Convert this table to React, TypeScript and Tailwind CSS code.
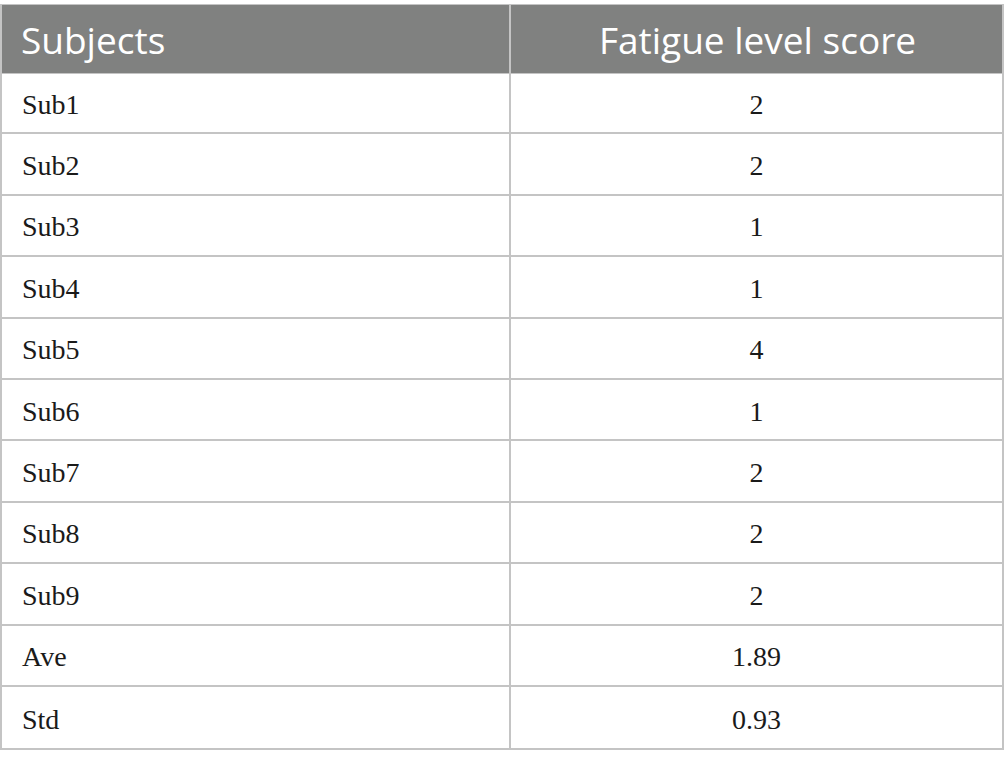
import React from "react";

const rows: [string, string][] = [
  ["Sub1", "2"],
  ["Sub2", "2"],
  ["Sub3", "1"],
  ["Sub4", "1"],
  ["Sub5", "4"],
  ["Sub6", "1"],
  ["Sub7", "2"],
  ["Sub8", "2"],
  ["Sub9", "2"],
  ["Ave", "1.89"],
  ["Std", "0.93"],
];

export default function App() {
  return (
    <div className="w-[1005px] h-[765px] bg-white pt-[4px]">
      <div className="w-[1004px] border-2 border-[#c4c4c4] border-t-[1.5px] border-b-[2px]">
        <div className="flex h-[68px] bg-[#808180] text-white font-['Open_Sans',sans-serif] text-[37px] leading-none">
          <div className="w-[509px] border-r-2 border-[#c4c4c4] flex items-center pl-[19px] pt-[1px]">
            Subjects
          </div>
          <div className="flex-1 flex items-center justify-center pt-[1px] pl-[2px]">
            Fatigue level score
          </div>
        </div>
        {rows.map(([a, b], i) => (
          <div
            key={a}
            className={`flex h-[61.4px] font-['Liberation_Serif',serif] text-[28px] leading-none text-[#1a1a1a] ${
              i < rows.length - 1 ? "border-b-2 border-[#c4c4c4]" : ""
            } ${i === 0 ? "border-t-[1px] border-t-[#c4c4c4]" : ""}`}
          >
            <div className="w-[509px] border-r-2 border-[#c4c4c4] flex items-center pl-[20px] pt-[4px]">
              {a}
            </div>
            <div className="flex-1 flex items-center justify-center pt-[4px]">{b}</div>
          </div>
        ))}
      </div>
    </div>
  );
}
